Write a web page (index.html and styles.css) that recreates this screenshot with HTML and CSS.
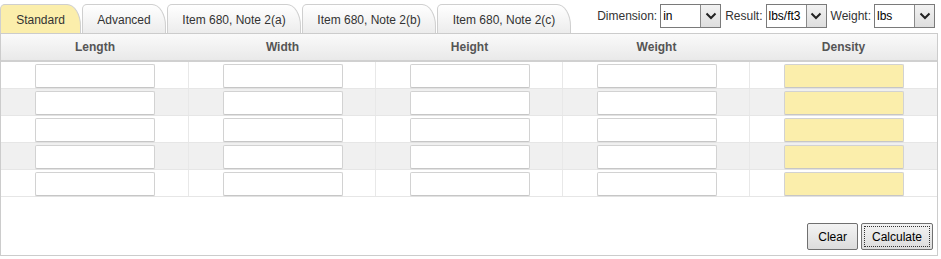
FILE: index.html
```html
<!DOCTYPE html>
<html>
<head>
<meta charset="utf-8">
<link rel="stylesheet" href="styles.css">
</head>
<body>
<div class="app">
  <div class="topbar">
    <div class="tabs">
      <div class="tab active w1">Standard</div>
      <div class="tab w2">Advanced</div>
      <div class="tab w3">Item 680, Note 2(a)</div>
      <div class="tab w3">Item 680, Note 2(b)</div>
      <div class="tab w3">Item 680, Note 2(c)</div>
    </div>
    <div class="controls">
      <span class="lbl">Dimension:</span>
      <div class="sel"><span class="val">in</span><span class="arr"><svg width="12" height="8" viewBox="0 0 12 8"><path d="M1.5 1.5 L6 6 L10.5 1.5" fill="none" stroke="#222" stroke-width="2"/></svg></span></div>
      <span class="lbl">Result:</span>
      <div class="sel"><span class="val">lbs/ft3</span><span class="arr"><svg width="12" height="8" viewBox="0 0 12 8"><path d="M1.5 1.5 L6 6 L10.5 1.5" fill="none" stroke="#222" stroke-width="2"/></svg></span></div>
      <span class="lbl">Weight:</span>
      <div class="sel"><span class="val">lbs</span><span class="arr"><svg width="12" height="8" viewBox="0 0 12 8"><path d="M1.5 1.5 L6 6 L10.5 1.5" fill="none" stroke="#222" stroke-width="2"/></svg></span></div>
    </div>
  </div>
  <div class="panel">
    <div class="grid head">
      <div class="hcell">Length</div>
      <div class="hcell">Width</div>
      <div class="hcell">Height</div>
      <div class="hcell">Weight</div>
      <div class="hcell">Density</div>
    </div>
    <div class="grid row"><div class="cell"><div class="inp"></div></div><div class="cell"><div class="inp"></div></div><div class="cell"><div class="inp"></div></div><div class="cell"><div class="inp"></div></div><div class="cell"><div class="inp res"></div></div></div>
    <div class="grid row alt"><div class="cell"><div class="inp"></div></div><div class="cell"><div class="inp"></div></div><div class="cell"><div class="inp"></div></div><div class="cell"><div class="inp"></div></div><div class="cell"><div class="inp res"></div></div></div>
    <div class="grid row"><div class="cell"><div class="inp"></div></div><div class="cell"><div class="inp"></div></div><div class="cell"><div class="inp"></div></div><div class="cell"><div class="inp"></div></div><div class="cell"><div class="inp res"></div></div></div>
    <div class="grid row alt"><div class="cell"><div class="inp"></div></div><div class="cell"><div class="inp"></div></div><div class="cell"><div class="inp"></div></div><div class="cell"><div class="inp"></div></div><div class="cell"><div class="inp res"></div></div></div>
    <div class="grid row"><div class="cell"><div class="inp"></div></div><div class="cell"><div class="inp"></div></div><div class="cell"><div class="inp"></div></div><div class="cell"><div class="inp"></div></div><div class="cell"><div class="inp res"></div></div></div>
    <div class="footer">
      <div class="btn">Clear</div>
      <div class="btn focus">Calculate</div>
    </div>
  </div>
</div>
</body>
</html>
```
FILE: styles.css
```css
html, body {
  margin: 0;
  padding: 0;
  background: #fff;
}
body {
  font-family: "Liberation Sans", Arial, sans-serif;
  font-size: 12px;
  color: #333;
}
.app {
  width: 938px;
}
.topbar {
  display: flex;
  height: 33px;
}
.tabs {
  display: flex;
  align-items: flex-end;
  gap: 1px;
}
.tab {
  box-sizing: border-box;
  height: 29px;
  border: 1px solid #cfcfcf;
  border-bottom: none;
  border-radius: 5px 14px 0 0 / 5px 22px 0 0;
  background: linear-gradient(#ffffff, #ececec);
  display: flex;
  align-items: center;
  justify-content: center;
  padding-top: 1px;
  color: #333;
}
.tab.active {
  background: #fbeeab;
}
.w1 { width: 81px; }
.w2 { width: 84px; }
.w3 { width: 134px; }
.controls {
  margin-left: auto;
  margin-top: 4px;
  margin-right: 3px;
  display: flex;
  align-items: center;
  height: 24px;
}
.lbl {
  color: #333;
  margin-right: 3px;
}
.sel {
  box-sizing: border-box;
  width: 61px;
  height: 24px;
  border: 1px solid #7a7a7a;
  display: flex;
  background: #fff;
  margin-right: 4px;
}
.sel:last-child { margin-right: 0; }
.sel .val {
  flex: 1;
  padding-left: 2px;
  line-height: 22px;
  color: #000;
  overflow: hidden;
  white-space: nowrap;
}
.sel .arr {
  width: 19px;
  border-left: 1px solid #8a8a8a;
  background: linear-gradient(#f2f2f2, #dedede);
  display: flex;
  align-items: center;
  justify-content: center;
}
.panel {
  border: 1px solid #cccccc;
  height: 221px;
  display: flex;
  flex-direction: column;
}
.grid {
  display: grid;
  grid-template-columns: 188px 187px 187px 187px 187px;
}
.head {
  height: 26px;
  background: linear-gradient(#fafafa, #e9e9e9);
  border-bottom: 2px solid #d0d0d0;
}
.hcell {
  display: flex;
  align-items: center;
  justify-content: center;
  font-weight: bold;
  color: #555;
}
.row {
  height: 26px;
  border-bottom: 1px solid #e6e6e6;
  background: #fff;
}
.row.alt {
  background: #f0f0f0;
}
.cell {
  box-sizing: border-box;
  padding: 2px 0 0 34px;
  border-right: 1px solid #e8e8e8;
}
.cell:last-child { border-right: none; }
.inp {
  box-sizing: border-box;
  width: 120px;
  height: 24px;
  border: 1px solid #d2d2d2;
  border-bottom-color: #c6c6c6;
  border-radius: 2px;
  background: #fff;
  box-shadow: 0 1px 0 #e2e2e2;
}
.inp.res {
  background: #fbeeab;
}
.footer {
  margin-top: auto;
  display: flex;
  justify-content: flex-end;
  gap: 3px;
  padding: 0 4px 5px 0;
}
.btn {
  box-sizing: border-box;
  height: 27px;
  border: 1px solid #707070;
  border-radius: 2px;
  background: linear-gradient(#f3f3f3, #dcdcdc);
  color: #000;
  display: flex;
  align-items: center;
  justify-content: center;
  padding: 0 10px;
}
.btn.focus {
  outline: 1px dotted #333;
  outline-offset: -4px;
}
```
